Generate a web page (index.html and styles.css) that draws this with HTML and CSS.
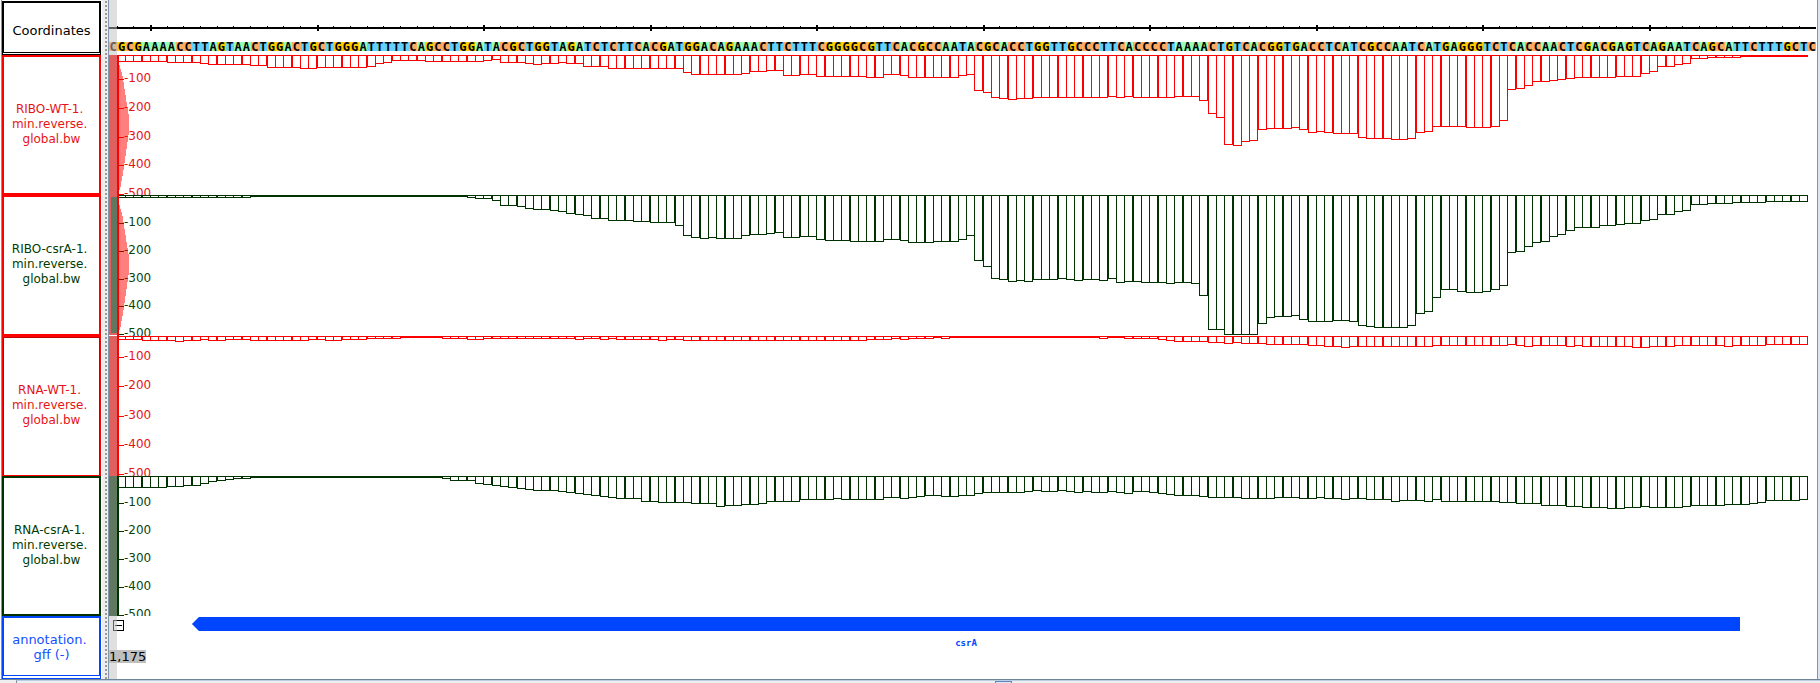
FILE: index.html
```html
<!DOCTYPE html>
<html lang="en">
<head>
<meta charset="utf-8">
<title>Genome browser</title>
<link rel="stylesheet" href="styles.css">
</head>
<body>
<main class="browser">
  <div class="label label-coords">Coordinates</div>
  <div class="splitter"></div>
  <section class="ruler">
    <svg class="ruler-scale" id="ruler"></svg>
    <div class="sequence" id="sequence"></div>
  </section>

  <div class="label label-track label-red">RIBO-WT-1. 
min.reverse. 
global.bw</div>
  <svg class="track red" data-track="riboWt"></svg>

  <div class="label label-track label-red green-text">RIBO-csrA-1. 
min.reverse. 
global.bw</div>
  <svg class="track green tall" data-track="riboCsrA"></svg>

  <div class="label label-track label-red-dark">RNA-WT-1. 
min.reverse. 
global.bw</div>
  <svg class="track red" data-track="rnaWt"></svg>

  <div class="label label-track label-green green-text">RNA-csrA-1. 
min.reverse. 
global.bw</div>
  <svg class="track green" data-track="rnaCsrA"></svg>

  <div class="label label-blue">annotation. 
gff (-)</div>
  <section class="annotation">
    <button class="collapse" type="button" aria-label="Collapse annotation"></button>
    <div class="gene"></div>
    <div class="gene-name">csrA</div>
    <div class="position">1,175</div>
  </section>
</main>
<footer class="scrollbar"><div class="scroll-track"><div class="thumb"></div></div></footer>
<script src="app.js"></script>
</body>
</html>
```
FILE: styles.css
```css
* { box-sizing: border-box; }

body {
  margin: 0;
  min-height: 100vh;
  display: flex;
  flex-direction: column;
  overflow: hidden;
  background: #fff;
  color: #000;
  font: 13px/15px "DejaVu Sans", sans-serif;
}

.browser {
  display: grid;
  grid-template-columns: 99px 8px minmax(0, 1fr);
  border-left: 1px solid #8496ab;
  margin-left: 1px;
  border-right: 1px solid #8496ab;
  margin-right: 2px;
  padding-right: 1px;
  box-shadow: 2px 0 0 #dce6f2;
}

.label {
  grid-column: 1;
  display: flex;
  align-items: center;
  justify-content: center;
  text-align: center;
  white-space: pre;
  border: 2px solid;
}
.label-coords {
  margin-top: 1px;
  border-bottom: 3px double #000;
  padding-top: 6px;
}
.label-track { font-size: 12px; padding-bottom: 2px; }
.label-red { color: #e61414; border-color: #f00; }
.label-red-dark {
  color: #e61414;
  border-color: #c00000;
  border-bottom: 1px solid #f00;
  outline: 1px solid #f00;
  outline-offset: -1px;
}
.label-green { border-color: #003200; }
.label.green-text { color: #003c00; }
.label-blue { color: #1450ff; border: 2px solid #0046ff; border-bottom: 4px double #0046ff; }

.splitter {
  grid-column: 2;
  grid-row: 1 / 7;
  background: #eee linear-gradient(#888, #888) 3px 2px / 1px 1px no-repeat;
  background: radial-gradient(circle at 4px 2px, #999 0, #999 1px, #eee 1px) 0 0 / 8px 4px;
  border-left: 1px solid #fff;
  border-right: 1px solid #8496ab;
}

.ruler {
  grid-column: 3;
  height: 55px;
  position: relative;
}
.ruler::after, .annotation::after {
  content: "";
  position: absolute;
  top: 0;
  bottom: 0;
  left: 0;
  width: 8px;
  background: rgba(192, 192, 192, .5);
}
.ruler-scale { display: block; width: 100%; height: 42px; }

.sequence {
  display: flex;
  font: bold 12px/11px "DejaVu Sans Mono", monospace;
  text-align: center;
}
.base { flex: 1 1 0; min-width: 0; height: 9px; }
.base-A { background: #96ffb4; }
.base-C { background: #ffaa64; }
.base-G { background: #ffcc00; }
.base-T { background: #64d2ff; }

.track {
  grid-column: 3;
  display: block;
  width: 100%;
  height: 140px;
  overflow: hidden;
  shape-rendering: crispEdges;
  font-size: 12px;
}
.tall { height: 141px; }
.red { --ink: #f00; --strip: #e06060; --number: #e61414; }
.green { --ink: #003200; --strip: #607860; --number: #0a460a; }
.line { fill: none; stroke: var(--ink); }
.solid { fill: var(--ink); }
.strip { fill: var(--strip); }
.number { fill: var(--number); }
.hot { fill: #f00; }
.hot-strip { fill: #e06060; }
.bulge { fill: #ff0000; fill-opacity: .5; }

.annotation {
  grid-column: 3;
  height: 63px;
  position: relative;
  padding-top: 1px;
}
.collapse {
  position: absolute;
  left: 4px;
  top: 4px;
  width: 11px;
  height: 11px;
  padding: 0;
  border: 1px solid #000;
  background: linear-gradient(#000, #000) center / 7px 1px no-repeat #fff;
}
.gene {
  height: 14px;
  margin: 0 4.45% 0 4.86%;
  background: #0046ff;
  clip-path: polygon(0 50%, 7px 0, 100% 0, 100% 100%, 7px 100%);
}
.gene-name {
  margin: 7px 4.45% 0 4.86%;
  text-align: center;
  color: #0046ff;
  font: bold 9px/11px "DejaVu Sans Mono", monospace;
}
.position {
  position: relative;
  z-index: 1;
  width: max-content;
  margin-top: 1px;
  background: #bfbfbf;
  height: 13px;
  line-height: 14px;
}

.scrollbar {
  flex: 1;
  min-height: 4px;
  border-top: 1px solid #708498;
  background: #eee;
  padding-left: 16px;
  display: flex;
}
.scroll-track {
  flex: 1;
  border-left: 1px solid #7a8a99;
  border-top: 1px solid #b8cfe5;
  padding-left: 54.2%;
  display: flex;
}
.thumb {
  width: 17px;
  border: 1px solid #6382bf;
  border-bottom: 0;
  background: #dce8f6;
}
```
FILE: app.js
```js
const SEQUENCE =
  "CGCGAAAACCTTAGTAACTGGACTGCTGGGATTTTTC" +
  "AGCCTGGATACGCTGGTAGATCTCTTCACGATGGACAGAAACTTCTTTCGGGGCGT" +
  "TCACGCCAATACGCACCTGGTTGCCCTTCACCCCTAAAACTGTCACGGTGACCTC" +
  "ATCGCCAATCATGAGGGTCTCACCAACTCGACGAGTCAGAATCAGCATTCTTTGCTC";

// Coverage depth per base; "12x4" repeats a depth for four bases.
const TRACKS = {
  riboWt: {
    ticks: [24, 53, 82, 110, 139], bulge: true,
    depth: "6x6 7x4 8 9x5 10x2 12x4 13x2 12x6 11 8 7 5x4 6x7 5 4 7x3 8 9 8x2 7 8x2 11x3 13x9 17 19x6 18 16x2 15x2 20x2 19x2 21x6 22x2 19x2 20 22x6 20 19 35 37 42 43 44 43x2 42x9 41 42 41 42x5 41x3 45 58 62 89 90 86 85 74 73x3 72 74 77 76 77 78x3 82 83x3 84x2 83 77 76 71x4 72x3 71 65 34 33 30 26x2 25 24 23 22x5 21x3 18 16 11x2 9 8 3x2 2x4 1x8"
  },
  riboCsrA: {
    ticks: [28, 56, 84, 111, 139], bulge: true, hotAxis: true,
    depth: "2x16 1x26 2 3x2 5 10x2 11 13 14x2 15 16 18 19 20 23x2 25x3 26x2 27x3 30 40 42 43 42 43x3 40 39x2 38 37 42x2 41x2 44 45x3 46x4 44x2 45 47x3 46x3 44 40 65 71 83 84 86 85 86 84x3 83 84 85 84x2 85 83 87 86x2 87x3 88 87x2 88 100 134x2 139x4 128 122 121x2 120 124 126x3 125x2 126 130 131 132x4 130 118 116 102 94x2 96 97x2 96 94 90 57 56 51 47 46 41 39 35 32x3 30x2 29 28x2 25 24 19x2 16 15 9x2 8x3 7x4 6x5"
  },
  rnaWt: {
    ticks: [21, 50, 80, 109, 138],
    depth: "3x3 4x4 5 4x2 3 4x2 3x3 4x7 3x2 4x2 3x3 2x4 1x5 2x3 3x2 2x11 3 2x2 3 2 3x5 4 3x2 4x22 3x3 2 3 2x3 1 2 1x18 2 1x2 2x4 3 4 5x4 6x2 7 6 7x3 8x5 9x2 10x2 11 10x10 9x9 8 9 10 9x4 10 9 10x6 11x2 10x3 9x6 10 9x4 8x5"
  },
  rnaCsrA: {
    ticks: [27, 55, 83, 111, 139],
    depth: "11x6 10x2 9x2 7 5 4 3 2x2 1x23 2 4x3 7 8 9 10 11 12 13 14x3 15 16 17 18 19 20 21 22x3 25x2 26x4 27x3 30 29x2 28x2 27 25x4 23x4 22 23x5 21x2 22 21 20 19x2 20x2 19x2 17 16x5 15 14 15x2 14 15 16 15 16 16 15 16 17 15x2 16 17 18 19x3 20 21x4 22x4 21x3 22x2 21 22x2 23 22x2 23x3 25 24x3 25 23 25x7 26x2 27x3 29x3 30x2 31x3 32x2 31x2 30 31x4 30 29x4 28x3 27 26 24x4 23"
  }
};

const expand = text => text.split(" ").flatMap(run => {
  const [value, count = 1] = run.split("x").map(Number);
  return Array(count).fill(value);
});

document.getElementById("sequence").innerHTML =
  [...SEQUENCE].map(b => `<span class="base base-${b}">${b}</span>`).join("");

function drawRuler(svg) {
  const width = svg.clientWidth;
  const pitch = width / SEQUENCE.length;
  let out = `<rect x="0" y="27" width="${width}" height="2"/>`;
  for (let k = 0; 1 + 2 * k < SEQUENCE.length; k++) {
    const x = Math.floor(pitch * (1 + 2 * k));
    out += k % 10 === 2
      ? `<rect x="${x}" y="25" width="2" height="6"/>`
      : `<rect x="${x}" y="26" width="1" height="1"/>`;
  }
  svg.innerHTML = out;
}

function drawTrack(svg) {
  const track = TRACKS[svg.dataset.track];
  const pitch = svg.clientWidth / SEQUENCE.length;
  const path = expand(track.depth).map((d, i) =>
    `M${Math.floor(pitch * (i + 1)) + 0.5} 0.5h8v${d}h-8z`).join("");
  const hot = track.hotAxis;
  let out = `<path class="line" d="${path}"/>`;
  out += hot
    ? '<rect class="hot-strip" width="8" height="140"/><rect class="strip" x="2" y="2" width="6" height="136"/>'
    : '<rect class="strip" width="8" height="140"/>';
  track.ticks.forEach((y, i) => {
    out += `<rect class="solid" x="10" y="${y}" width="5" height="1"/>`;
    out += `<text class="number" x="15" y="${y + 3}">-${(i + 1) * 100}</text>`;
  });
  if (track.bulge) {
    out += '<path class="bulge" d="M10 8L14 23L16 37L18 50L20 62V76L18 91L16 105L14 118L11 135H10z"/>';
  }
  out += `<rect class="${hot ? "hot" : "solid"}" x="8" width="2" height="141"/>`;
  svg.innerHTML = out;
}

function draw() {
  drawRuler(document.getElementById("ruler"));
  document.querySelectorAll(".track").forEach(drawTrack);
}
draw();
window.addEventListener("resize", draw);
```
